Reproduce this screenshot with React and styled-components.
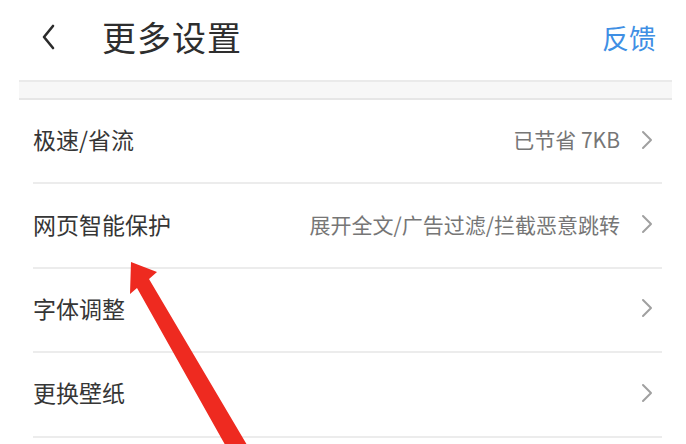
import React from 'react'
import styled, { createGlobalStyle } from 'styled-components'

const rows = [
    { label: '极速/省流', value: '已节省 7KB' },
    { label: '网页智能保护', value: '展开全文/广告过滤/拦截恶意跳转' },
    { label: '字体调整' },
    { label: '更换壁纸' },
]

const BackIcon = () => (
    <svg width="16" height="26" viewBox="0 0 16 26">
        <path
            d="M13 2 L4 13 L13 24"
            fill="none"
            stroke="currentColor"
            strokeWidth="2.6"
            strokeLinecap="round"
            strokeLinejoin="round"
        />
    </svg>
)

const Chevron = () => (
    <svg width="14" height="20" viewBox="0 0 14 20">
        <path
            d="M3 2 L11 10 L3 18"
            fill="none"
            stroke="currentColor"
            strokeWidth="2"
            strokeLinecap="round"
            strokeLinejoin="round"
        />
    </svg>
)

const App = () => {
    return (
        <>
            <GlobalStyle />
            <Page>
                <Header>
                    <BackButton>
                        <BackIcon />
                    </BackButton>
                    <Title>更多设置</Title>
                    <Feedback>反馈</Feedback>
                </Header>
                <Band />
                <List>
                    {rows.map((row) => (
                        <Row key={row.label}>
                            <Label>{row.label}</Label>
                            {row.value && <Value>{row.value}</Value>}
                            <Arrow>
                                <Chevron />
                            </Arrow>
                        </Row>
                    ))}
                </List>

                {/* Annotation drawn over the screenshot. */}
                <Pointer viewBox="0 0 686 444" width="686" height="444">
                    <polygon
                        points="131,262 157,272 149,279 250,450 228,450 137,288 130,294"
                        fill="#ee2a20"
                    />
                </Pointer>
            </Page>
        </>
    )
}

const GlobalStyle = createGlobalStyle`
    * {
        box-sizing: border-box;
    }

    body {
        margin: 0;
        background: #fff;
        font-family: 'Noto Sans CJK SC', 'Noto Sans', sans-serif;
    }
`

const Page = styled('div')`
    position: relative;
    width: 686px;
    height: 444px;
    overflow: hidden;
    background: #fff;
`

const Header = styled('header')`
    display: flex;
    align-items: center;
    height: 80px;
    padding: 0 30px 6px 40px;
`

const BackButton = styled('div')`
    display: flex;
    color: #2b2b2b;
    width: 62px;
`

const Title = styled('h1')`
    flex: 1;
    margin: 0;
    font-size: 34px;
    font-weight: 400;
    line-height: 1;
    color: #2e2e2e;
    letter-spacing: 1px;
`

const Feedback = styled('span')`
    font-size: 27px;
    line-height: 1;
    color: #3f8fe4;
`

const Band = styled('div')`
    height: 20px;
    margin: 0 14px 0 19px;
    background: #f7f7f7;
    border-top: 2px solid #eaeaea;
    border-bottom: 2px solid #e6e6e6;
`

const List = styled('ul')`
    margin: 0;
    padding: 0 24px 0 33px;
    list-style: none;
`

const Row = styled('li')`
    display: flex;
    align-items: center;
    height: 84.4px;
    padding-bottom: 3px;
    border-bottom: 2px solid #ececec;
`

const Label = styled('span')`
    flex: 1;
    font-size: 23px;
    line-height: 1;
    color: #363636;
`

const Value = styled('span')`
    font-size: 21px;
    line-height: 1;
    color: #767676;
    margin-right: 20px;
`

const Arrow = styled('span')`
    display: flex;
    color: #a0a0a0;
    margin-right: 8px;
`

const Pointer = styled('svg')`
    position: absolute;
    left: 0;
    top: 0;
    pointer-events: none;
`

export default App
